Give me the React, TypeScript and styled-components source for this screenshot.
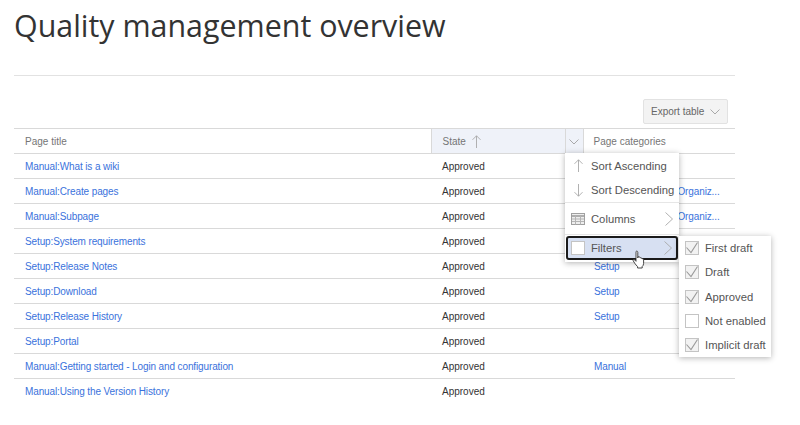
import styled, { createGlobalStyle } from 'styled-components';

const GlobalStyle = createGlobalStyle`
  html, body {
    margin: 0;
    padding: 0;
    background: #fff;
    overflow: hidden;
  }
`;

const Page = styled.div`
  width: 800px;
  height: 425px;
  padding: 0 65px 0 14px;
  box-sizing: border-box;
  font-family: "Liberation Sans", Roboto, sans-serif;
  font-size: 10px;
  color: #333;
  overflow: hidden;
`;

const Title = styled.h1`
  margin: 0;
  padding-top: 4px;
  height: 69px;
  box-sizing: border-box;
  font-family: "Open Sans", sans-serif;
  font-size: 30.4px;
  line-height: 44px;
  font-weight: 400;
  color: #333;
`;

const Rule = styled.hr`
  margin: 6px 0 0;
  border: 0;
  border-top: 1px solid #e2e2e2;
`;

const Toolbar = styled.div`
  display: flex;
  justify-content: flex-end;
  padding: 23px 7px 4px 0;
`;

const ExportButton = styled.button`
  display: flex;
  align-items: center;
  justify-content: space-between;
  width: 85px;
  height: 25px;
  padding: 0 7px 0 7px;
  box-sizing: border-box;
  background: #f3f3f3;
  border: 1px solid #e2e2e2;
  border-radius: 2px;
  font: inherit;
  color: #666;
  white-space: nowrap;
`;

const TableWrap = styled.div`
  position: relative;
`;

const Table = styled.table`
  width: 721px;
  table-layout: fixed;
  border-collapse: collapse;
  border-top: 1px solid #d9d9d9;
`;

const HeadCell = styled.th<{ $active?: boolean; $menu?: boolean; $last?: boolean }>`
  height: 24px;
  padding: ${({ $menu, $last }) => ($menu ? '0' : $last ? '0 0 0 10px' : '0 0 0 11px')};
  text-align: ${({ $menu }) => ($menu ? 'center' : 'left')};
  font-weight: 400;
  color: #757575;
  background: ${({ $active }) => ($active ? '#eff2f9' : '#fff')};
  border-bottom: 1px solid #d9d9d9;
  border-left: ${({ $active, $menu }) => ($active || $menu ? '1px solid #d9d9d9' : '0')};
  border-right: ${({ $menu }) => ($menu ? '1px solid #d9d9d9' : '0')};
`;

const HeadInner = styled.span`
  display: inline-flex;
  align-items: center;
  gap: 6px;
`;

const Cell = styled.td`
  height: 24px;
  padding: 0 0 0 11px;
  border-bottom: 1px solid #d9d9d9;
  color: #333;
  white-space: nowrap;
  overflow: hidden;
  text-overflow: ellipsis;
`;

const LastRow = styled.tr`
  td {
    border-bottom: 0;
  }
`;

const WikiLink = styled.a`
  letter-spacing: -0.12px;
  color: #3a72dc;
  text-decoration: none;
`;

const Menu = styled.div`
  position: absolute;
  top: 25px;
  left: 551px;
  width: 114px;
  height: 109px;
  box-sizing: border-box;
  background: #fff;
  box-shadow: 0 1px 6px rgba(0, 0, 0, 0.3);
  font-size: 11.25px;
  color: #555;
`;

const MenuItem = styled.div<{ $height: number }>`
  display: flex;
  align-items: center;
  height: ${({ $height }) => $height}px;
  padding: 0 6px 0 6px;
  gap: 6px;
  white-space: nowrap;
`;

const IconSlot = styled.span`
  display: flex;
  justify-content: center;
  width: 14px;
  flex: none;
`;

const Divider = styled.div`
  border-top: 1px solid #e6e6e6;
`;

const FiltersItem = styled.div`
  display: flex;
  align-items: center;
  height: 24px;
  margin: 1px 1px 0 1px;
  padding: 0 4px 0 3px;
  gap: 6px;
  box-sizing: border-box;
  background: #d7e0f2;
  border: 2px solid #1a1a1a;
  border-radius: 3px;
`;

const MenuLabel = styled.span`
  flex: 1;
`;

const Check = styled.span<{ $bg?: string }>`
  display: flex;
  align-items: center;
  justify-content: center;
  width: 14px;
  height: 14px;
  flex: none;
  box-sizing: border-box;
  background: ${({ $bg }) => $bg ?? '#fff'};
  border: 1px solid #c4c4c4;
`;

const Submenu = styled.div`
  position: absolute;
  top: 108px;
  left: 665px;
  width: 92px;
  height: 121px;
  box-sizing: border-box;
  background: #fff;
  box-shadow: 0 1px 6px rgba(0, 0, 0, 0.3);
  font-size: 11.25px;
  color: #555;
`;

const SubItem = styled.div`
  display: flex;
  align-items: center;
  gap: 6px;
  height: 24.3px;
  padding-left: 6px;
  white-space: nowrap;
`;

const Cursor = styled.svg`
  position: absolute;
  top: 122px;
  left: 618px;
`;

const rows = [
  { title: 'Manual:What is a wiki', category: '' },
  { title: 'Manual:Create pages', category: 'Manual, Releases, Organiz...' },
  { title: 'Manual:Subpage', category: 'Manual, Releases, Organiz...' },
  { title: 'Setup:System requirements', category: '' },
  { title: 'Setup:Release Notes', category: 'Setup' },
  { title: 'Setup:Download', category: 'Setup' },
  { title: 'Setup:Release History', category: 'Setup' },
  { title: 'Setup:Portal', category: '' },
  { title: 'Manual:Getting started - Login and configuration', category: 'Manual' },
  { title: 'Manual:Using the Version History', category: '' },
];

const filters = [
  { label: 'First draft', checked: true },
  { label: 'Draft', checked: true },
  { label: 'Approved', checked: true },
  { label: 'Not enabled', checked: false },
  { label: 'Implicit draft', checked: true },
];

function CheckMark() {
  return (
    <svg width="14" height="14" viewBox="0 0 14 14" fill="none" style={{ flex: 'none' }}>
      <path d="M1.5 6.5l4.5 5 6.5-10" stroke="#9a9a9a" strokeWidth="1.1" />
    </svg>
  );
}

function ColumnsIcon() {
  return (
    <svg width="14" height="12" viewBox="0 0 14 12" fill="none">
      <rect x="0.5" y="0.5" width="13" height="11" fill="#eee" stroke="#a0a0a0" />
      <path d="M0.5 3h13" stroke="#999" strokeWidth="1.5" />
      <path d="M4.5 3v8.5M9.5 3v8.5M1 6h12M1 8.5h12" stroke="#b4b4b4" />
    </svg>
  );
}

function Chevron({ dir }: { dir: 'down' | 'right' }) {
  if (dir === 'down') {
    return (
      <svg width="10" height="6" viewBox="0 0 10 6" fill="none" style={{ flex: 'none' }}>
        <path d="M0.5 0.5L5 5l4.5-4.5" stroke="#a0a0a0" strokeWidth="0.9" />
      </svg>
    );
  }
  return (
    <svg width="8" height="14" viewBox="0 0 8 14" fill="none" style={{ flex: 'none' }}>
      <path d="M0.5 0.5L7.5 7l-7 6.5" stroke="#a8a8a8" strokeWidth="0.9" />
    </svg>
  );
}

function Arrow({ dir }: { dir: 'up' | 'down' }) {
  return (
    <svg width="9" height="13" viewBox="0 0 9 13" fill="none" style={{ flex: 'none' }}>
      {dir === 'up' ? (
        <path d="M4.5 13V0.8M0.5 4.8l4-4 4 4" stroke="#a8a8a8" strokeWidth="0.9" />
      ) : (
        <path d="M4.5 0v12.2M0.5 8.2l4 4 4-4" stroke="#a8a8a8" strokeWidth="0.9" />
      )}
    </svg>
  );
}

export default function App() {
  return (
    <Page>
      <GlobalStyle />
      <Title>Quality management overview</Title>
      <Rule />
      <Toolbar>
        <ExportButton>
          Export table
          <Chevron dir="down" />
        </ExportButton>
      </Toolbar>
      <TableWrap>
        <Table>
          <colgroup>
            <col style={{ width: 417 }} />
            <col style={{ width: 134 }} />
            <col style={{ width: 18 }} />
            <col />
          </colgroup>
          <thead>
            <tr>
              <HeadCell>Page title</HeadCell>
              <HeadCell $active>
                <HeadInner>
                  State
                  <Arrow dir="up" />
                </HeadInner>
              </HeadCell>
              <HeadCell $active $menu>
                <Chevron dir="down" />
              </HeadCell>
              <HeadCell $last>Page categories</HeadCell>
            </tr>
          </thead>
          <tbody>
            {rows.map((row, i) => {
              const Row = i === rows.length - 1 ? LastRow : 'tr';
              return (
                <Row key={row.title}>
                  <Cell><WikiLink href="#">{row.title}</WikiLink></Cell>
                  <Cell colSpan={2}>Approved</Cell>
                  <Cell><WikiLink href="#">{row.category}</WikiLink></Cell>
                </Row>
              );
            })}
          </tbody>
        </Table>

        <Menu>
          <MenuItem $height={25}>
            <IconSlot><Arrow dir="up" /></IconSlot>
            Sort Ascending
          </MenuItem>
          <MenuItem $height={24}>
            <IconSlot><Arrow dir="down" /></IconSlot>
            Sort Descending
          </MenuItem>
          <Divider />
          <MenuItem $height={31}>
            <IconSlot><ColumnsIcon /></IconSlot>
            <MenuLabel>Columns</MenuLabel>
            <Chevron dir="right" />
          </MenuItem>
          <Divider />
          <FiltersItem>
            <Check />
            <MenuLabel>Filters</MenuLabel>
            <Chevron dir="right" />
          </FiltersItem>
        </Menu>

        <Submenu>
          {filters.map((f) => (
            <SubItem key={f.label}>
              <Check $bg={f.checked ? '#f2f2f2' : '#fff'}>{f.checked && <CheckMark />}</Check>
              {f.label}
            </SubItem>
          ))}
        </Submenu>

        <Cursor width="14" height="19" viewBox="0 0 14 19">
          <path
            d="M4 1.5c.8-.8 1.8-.3 1.8.8V8l.3-1.2c1-.6 1.8 0 1.8.8l.2.3c.8-.5 1.7-.1 1.7.7l.2.2c.8-.3 1.6.1 1.6 1v3.6c0 1.5-.6 2.5-1.4 3.1V18H5.6v-1.3C4 15 2.3 13 1.2 10.8c-.4-.9.6-1.7 1.4-1L4 11.3V2.2z"
            fill="#fff"
            stroke="#333"
            strokeWidth="0.9"
          />
        </Cursor>
      </TableWrap>
    </Page>
  );
}
